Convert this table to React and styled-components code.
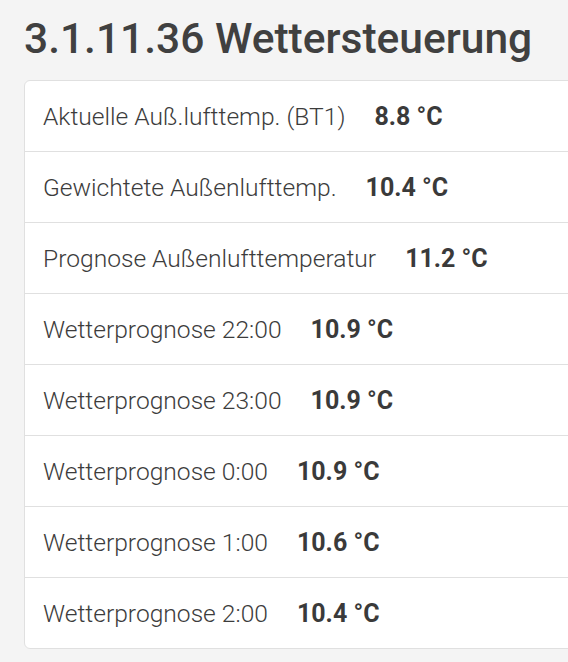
import React from 'react'
import styled, { createGlobalStyle } from 'styled-components'

const GlobalStyle = createGlobalStyle`
    html, body {
        margin: 0;
        padding: 0;
        overflow: hidden;
        background: #f4f4f4;
        font-family: Roboto, "Liberation Sans", sans-serif;
        color: #444;
    }
`

const Page = styled.div`
    padding: 14px 0 0 24px;
    width: 600px;
`

const Title = styled.h1`
    margin: 0 0 16px 0;
    font-size: 42.5px;
    font-weight: 500;
    line-height: 50px;
    color: #404040;
`

const Card = styled.div`
    background: #fff;
    border: 1px solid #e0e0e0;
    border-radius: 6px;
`

const Row = styled.div`
    display: flex;
    align-items: center;
    gap: 29px;
    height: 70px;
    padding-left: 18px;
    border-top: ${props => (props.first ? 'none' : '1px solid #e0e0e0')};
`

const Label = styled.span`
    font-size: 24.6px;
    font-weight: 300;
    color: #3c3c3c;
`

const Value = styled.span`
    font-size: 25px;
    font-weight: 700;
    color: #3a3a3a;
`

const ROWS = [
    ['Aktuelle Auß.lufttemp. (BT1)', '8.8 °C'],
    ['Gewichtete Außenlufttemp.', '10.4 °C'],
    ['Prognose Außenlufttemperatur', '11.2 °C'],
    ['Wetterprognose 22:00', '10.9 °C'],
    ['Wetterprognose 23:00', '10.9 °C'],
    ['Wetterprognose 0:00', '10.9 °C'],
    ['Wetterprognose 1:00', '10.6 °C'],
    ['Wetterprognose 2:00', '10.4 °C'],
]

export default function App() {
    return (
        <React.Fragment>
            <GlobalStyle />
            <Page>
                <Title>3.1.11.36 Wettersteuerung</Title>
                <Card>
                    {ROWS.map(([label, value], i) => (
                        <Row key={label} first={i === 0}>
                            <Label>{label}</Label>
                            <Value>{value}</Value>
                        </Row>
                    ))}
                </Card>
            </Page>
        </React.Fragment>
    )
}
